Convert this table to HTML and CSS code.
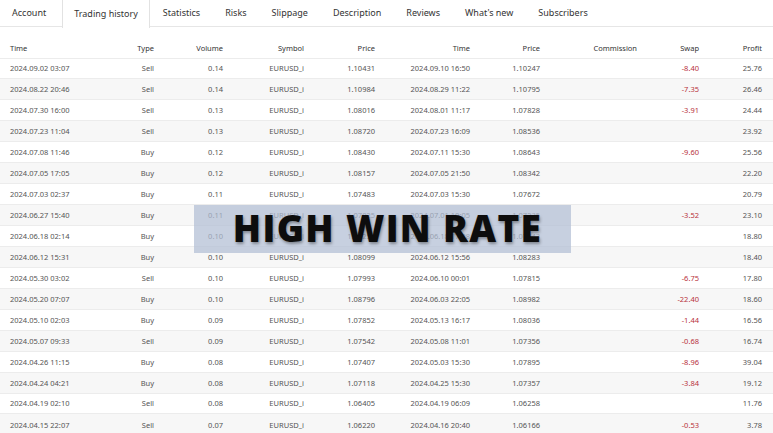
FILE: index.html
```html
<!DOCTYPE html>
<html>
<head>
<meta charset="utf-8">
<link rel="stylesheet" href="styles.css">
</head>
<body>
<div class="page">
  <nav class="tabs">
    <span class="tab">Account</span>
    <span class="tab active">Trading history</span>
    <span class="tab">Statistics</span>
    <span class="tab">Risks</span>
    <span class="tab">Slippage</span>
    <span class="tab">Description</span>
    <span class="tab">Reviews</span>
    <span class="tab">What's new</span>
    <span class="tab">Subscribers</span>
  </nav>
  <table class="history">
    <colgroup>
      <col class="c-time"><col class="c-type"><col class="c-vol"><col class="c-sym"><col class="c-price">
      <col class="c-time2"><col class="c-price2"><col class="c-comm"><col class="c-swap"><col class="c-profit">
    </colgroup>
    <thead>
      <tr><th class="l">Time</th><th>Type</th><th>Volume</th><th>Symbol</th><th>Price</th><th>Time</th><th>Price</th><th>Commission</th><th>Swap</th><th class="last">Profit</th></tr>
    </thead>
    <tbody>
      <tr><td class="l">2024.09.02 03:07</td><td>Sell</td><td>0.14</td><td>EURUSD_i</td><td>1.10431</td><td>2024.09.10 16:50</td><td>1.10247</td><td></td><td class="neg">-8.40</td><td class="last">25.76</td></tr>
      <tr><td class="l">2024.08.22 20:46</td><td>Sell</td><td>0.14</td><td>EURUSD_i</td><td>1.10984</td><td>2024.08.29 11:22</td><td>1.10795</td><td></td><td class="neg">-7.35</td><td class="last">26.46</td></tr>
      <tr><td class="l">2024.07.30 16:00</td><td>Sell</td><td>0.13</td><td>EURUSD_i</td><td>1.08016</td><td>2024.08.01 11:17</td><td>1.07828</td><td></td><td class="neg">-3.91</td><td class="last">24.44</td></tr>
      <tr><td class="l">2024.07.23 11:04</td><td>Sell</td><td>0.13</td><td>EURUSD_i</td><td>1.08720</td><td>2024.07.23 16:09</td><td>1.08536</td><td></td><td></td><td class="last">23.92</td></tr>
      <tr><td class="l">2024.07.08 11:46</td><td>Buy</td><td>0.12</td><td>EURUSD_i</td><td>1.08430</td><td>2024.07.11 15:30</td><td>1.08643</td><td></td><td class="neg">-9.60</td><td class="last">25.56</td></tr>
      <tr><td class="l">2024.07.05 17:05</td><td>Buy</td><td>0.12</td><td>EURUSD_i</td><td>1.08157</td><td>2024.07.05 21:50</td><td>1.08342</td><td></td><td></td><td class="last">22.20</td></tr>
      <tr><td class="l">2024.07.03 02:37</td><td>Buy</td><td>0.11</td><td>EURUSD_i</td><td>1.07483</td><td>2024.07.03 15:30</td><td>1.07672</td><td></td><td></td><td class="last">20.79</td></tr>
      <tr><td class="l">2024.06.27 15:40</td><td>Buy</td><td>0.11</td><td>EURUSD_i</td><td>1.07025</td><td>2024.07.01 10:05</td><td>1.07235</td><td></td><td class="neg">-3.52</td><td class="last">23.10</td></tr>
      <tr><td class="l">2024.06.18 02:14</td><td>Buy</td><td>0.10</td><td>EURUSD_i</td><td>1.07255</td><td>2024.06.18 17:28</td><td>1.07443</td><td></td><td></td><td class="last">18.80</td></tr>
      <tr><td class="l">2024.06.12 15:31</td><td>Buy</td><td>0.10</td><td>EURUSD_i</td><td>1.08099</td><td>2024.06.12 15:56</td><td>1.08283</td><td></td><td></td><td class="last">18.40</td></tr>
      <tr><td class="l">2024.05.30 03:02</td><td>Sell</td><td>0.10</td><td>EURUSD_i</td><td>1.07993</td><td>2024.06.10 00:01</td><td>1.07815</td><td></td><td class="neg">-6.75</td><td class="last">17.80</td></tr>
      <tr><td class="l">2024.05.20 07:07</td><td>Buy</td><td>0.10</td><td>EURUSD_i</td><td>1.08796</td><td>2024.06.03 22:05</td><td>1.08982</td><td></td><td class="neg">-22.40</td><td class="last">18.60</td></tr>
      <tr><td class="l">2024.05.10 02:03</td><td>Buy</td><td>0.09</td><td>EURUSD_i</td><td>1.07852</td><td>2024.05.13 16:17</td><td>1.08036</td><td></td><td class="neg">-1.44</td><td class="last">16.56</td></tr>
      <tr><td class="l">2024.05.07 09:33</td><td>Sell</td><td>0.09</td><td>EURUSD_i</td><td>1.07542</td><td>2024.05.08 11:01</td><td>1.07356</td><td></td><td class="neg">-0.68</td><td class="last">16.74</td></tr>
      <tr><td class="l">2024.04.26 11:15</td><td>Buy</td><td>0.08</td><td>EURUSD_i</td><td>1.07407</td><td>2024.05.03 15:30</td><td>1.07895</td><td></td><td class="neg">-8.96</td><td class="last">39.04</td></tr>
      <tr><td class="l">2024.04.24 04:21</td><td>Buy</td><td>0.08</td><td>EURUSD_i</td><td>1.07118</td><td>2024.04.25 15:30</td><td>1.07357</td><td></td><td class="neg">-3.84</td><td class="last">19.12</td></tr>
      <tr><td class="l">2024.04.19 02:10</td><td>Sell</td><td>0.08</td><td>EURUSD_i</td><td>1.06405</td><td>2024.04.19 06:09</td><td>1.06258</td><td></td><td></td><td class="last">11.76</td></tr>
      <tr><td class="l">2024.04.15 22:07</td><td>Sell</td><td>0.07</td><td>EURUSD_i</td><td>1.06220</td><td>2024.04.16 20:40</td><td>1.06166</td><td></td><td class="neg">-0.53</td><td class="last">3.78</td></tr>
    </tbody>
  </table>
  <div class="banner">HIGH WIN RATE</div>
</div>
</body>
</html>
```

FILE: styles.css
```css
* { box-sizing: border-box; }
html, body { margin: 0; padding: 0; background: #fff; }
body { width: 773px; height: 433px; overflow: hidden; font-family: "Noto Sans", "Open Sans", sans-serif; color: #444; }
.page { position: relative; width: 773px; height: 433px; }

.tabs {
  display: flex;
  height: 27px;
  border-bottom: 1px solid #e6e6e6;
  font-size: 9px;
  color: #333;
}
.tab {
  display: flex;
  align-items: center;
  padding: 0 13px 2px 12px;
  height: 27px;
  white-space: nowrap;
}
.tab.active {
  background: #fff;
  border-left: 1px solid #e2e2e2;
  border-right: 1px solid #e2e2e2;
  height: 28px;
  padding: 0 11px 2px 11px;
  margin-left: 3px;
  margin-right: 1px;
}

.history {
  margin-top: 11px;
  width: 773px;
  border-collapse: collapse;
  table-layout: fixed;
  font-size: 7.5px;
}
.c-time { width: 100px; }
.c-type { width: 54px; }
.c-vol { width: 69px; }
.c-sym { width: 81px; }
.c-price { width: 71px; }
.c-time2 { width: 95px; }
.c-price2 { width: 70px; }
.c-comm { width: 97px; }
.c-swap { width: 62px; }
.c-profit { width: 74px; }

.history th, .history td {
  padding: 0;
  text-align: right;
  white-space: nowrap;
  vertical-align: middle;
}
.history th { height: 20px; font-weight: normal; color: #333; font-size: 7.5px; }
.history td { height: 20.94px; color: #555; }
.history tbody tr { border-top: 1px solid #ececec; }
.history tbody tr:nth-child(even) { background: #f7f7f7; }
.history .l { text-align: left; padding-left: 10px; }
.history .last { padding-right: 11px; }
.history .neg { color: #b8323c; }

.banner {
  position: absolute;
  left: 194px;
  top: 205px;
  width: 377px;
  height: 48px;
  background: rgba(178, 190, 212, 0.72);
  display: flex;
  align-items: center;
  justify-content: center;
  font-family: "Open Sans", sans-serif;
  font-weight: 800;
  font-size: 37px;
  letter-spacing: 1.3px;
  color: #0d0d0d;
  text-shadow: 1px 2px 3px rgba(0, 0, 0, 0.35);
  padding: 0 0 3px 10px;
}
```
